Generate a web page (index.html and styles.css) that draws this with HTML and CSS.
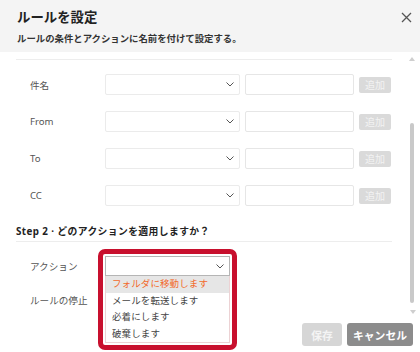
FILE: index.html
```html
<!DOCTYPE html>
<html lang="ja">
<head>
  <meta charset="UTF-8" />
  <title>ルールを設定</title>
  <link rel="stylesheet" href="styles.css">
</head>
<body>
  <div class="modal">

    <!-- HEADER -->
    <div class="modal-header">
      <div class="title-row">
        <h2>ルールを設定</h2>
        <svg class="close" width="11" height="11" viewBox="0 0 11 11"><path d="M1 1L10 10M10 1L1 10" stroke="#555" stroke-width="1.3" fill="none"/></svg>
      </div>
      <p class="subtitle">ルールの条件とアクションに名前を付けて設定する。</p>
    </div>

    <!-- BODY -->
    <div class="modal-body">
      <div class="scroll">
        <div class="divider"></div>

        <div class="conditions">
          <div class="cond-row">
            <span class="label">件名</span>
            <div class="select"><svg width="8" height="5" viewBox="0 0 8 5"><path d="M0.5 0.5L4 4L7.5 0.5" stroke="#555" stroke-width="1" fill="none"/></svg></div>
            <div class="text-input"></div>
            <button class="add-btn">追加</button>
          </div>
          <div class="cond-row">
            <span class="label">From</span>
            <div class="select"><svg width="8" height="5" viewBox="0 0 8 5"><path d="M0.5 0.5L4 4L7.5 0.5" stroke="#555" stroke-width="1" fill="none"/></svg></div>
            <div class="text-input"></div>
            <button class="add-btn">追加</button>
          </div>
          <div class="cond-row">
            <span class="label">To</span>
            <div class="select"><svg width="8" height="5" viewBox="0 0 8 5"><path d="M0.5 0.5L4 4L7.5 0.5" stroke="#555" stroke-width="1" fill="none"/></svg></div>
            <div class="text-input"></div>
            <button class="add-btn">追加</button>
          </div>
          <div class="cond-row">
            <span class="label">CC</span>
            <div class="select"><svg width="8" height="5" viewBox="0 0 8 5"><path d="M0.5 0.5L4 4L7.5 0.5" stroke="#555" stroke-width="1" fill="none"/></svg></div>
            <div class="text-input"></div>
            <button class="add-btn">追加</button>
          </div>
        </div>

        <h3 class="step">Step 2 · どのアクションを適用しますか？</h3>

        <div class="field-row">
          <span class="label">アクション</span>
          <div class="action-field">
            <div class="callout">
              <div class="action-select"><svg width="8" height="5" viewBox="0 0 8 5"><path d="M0.5 0.5L4 4L7.5 0.5" stroke="#555" stroke-width="1" fill="none"/></svg></div>
              <ul class="dropdown">
                <li class="active">フォルダに移動します</li>
                <li>メールを転送します</li>
                <li>必着にします</li>
                <li>破棄します</li>
              </ul>
            </div>
          </div>
        </div>

        <div class="field-row">
          <span class="label">ルールの停止</span>
        </div>
      </div>

      <!-- scrollbar -->
      <div class="scrollbar">
        <svg class="arrow-up" width="6" height="4" viewBox="0 0 6 4"><path d="M0 4L3 0L6 4Z" fill="#cfcfcf"/></svg>
        <div class="thumb"></div>
        <svg class="arrow-down" width="6" height="4" viewBox="0 0 6 4"><path d="M0 0L3 4L6 0Z" fill="#cfcfcf"/></svg>
      </div>
    </div>

    <!-- FOOTER -->
    <div class="modal-footer">
      <button class="btn btn-save">保存</button>
      <button class="btn btn-cancel">キャンセル</button>
    </div>
  </div>
</body>
</html>
```

FILE: styles.css
```css
/* Reset & Base */
* { box-sizing: border-box; margin: 0; padding: 0; }
body {
  font-family: "Noto Sans", "Noto Sans CJK JP", sans-serif;
  background: #fff;
  color: #333;
  width: 420px;
  height: 352px;
  overflow: hidden;
}
ul { list-style: none; }
button { font-family: inherit; border: none; }

/* Header */
.modal-header {
  height: 52px;
  background: #f4f4f4;
  padding: 8px 8px 0 17px;
}
.title-row {
  display: flex;
  justify-content: space-between;
  align-items: center;
  height: 18px;
}
.title-row h2 {
  font-size: 13.4px;
  font-weight: 700;
  color: #222;
  line-height: 18px;
}
.close { margin-top: 1px; }
.subtitle {
  margin-top: 6px;
  font-size: 9.4px;
  font-weight: 700;
  color: #333;
  line-height: 14px;
}

/* Body */
.modal-body {
  position: relative;
  height: 266px;
}
.scroll {
  padding: 7px 28px 0 16px;
}
.divider {
  border-top: 1px solid #ededed;
}

.conditions {
  margin-top: 14px;
  display: flex;
  flex-direction: column;
  gap: 16px;
}
.cond-row, .field-row {
  display: flex;
  align-items: center;
  padding-left: 14px;
}
.cond-row { height: 21px; }
.label {
  width: 75px;
  font-size: 9.6px;
  color: #555;
  flex-shrink: 0;
}
.select {
  width: 135px;
  height: 21px;
  border: 1px solid #ebebeb;
  border-radius: 2px;
  display: flex;
  align-items: center;
  justify-content: flex-end;
  padding-right: 5px;
}
.text-input {
  width: 109px;
  height: 21px;
  margin-left: 5px;
  border: 1px solid #e6e6e6;
  border-radius: 2px;
}
.add-btn {
  width: 32px;
  height: 16px;
  margin-left: 5px;
  background: #dadada;
  color: #f3f3f3;
  border-radius: 2px;
  font-size: 10px;
  line-height: 16px;
}

/* Step heading */
.step {
  margin-top: 20px;
  font-size: 9.8px;
  font-weight: 700;
  color: #222;
  letter-spacing: 0.4px;
  line-height: 12px;
  padding-bottom: 3px;
  border-bottom: 1px solid #ededed;
}

.field-row {
  height: 20px;
  margin-top: 14px;
}
.action-field {
  position: relative;
  width: 124px;
  height: 20px;
}
.callout {
  position: absolute;
  top: -7px;
  left: -7px;
  width: 139px;
  padding: 2px;
  border: 5px solid #c8102e;
  border-radius: 7px;
  background: #fff;
  z-index: 2;
}
.action-select {
  height: 20px;
  border: 1px solid #b5b5b5;
  display: flex;
  align-items: center;
  justify-content: flex-end;
  padding-right: 5px;
}
.dropdown {
  border: 1px solid #ecd2d4;
  border-top: none;
  background: #fff;
}
.dropdown li {
  height: 16.5px;
  line-height: 16.5px;
  padding-left: 6px;
  font-size: 9.5px;
  color: #444;
  letter-spacing: 0.1px;
}
.dropdown li.active {
  background: #e6e6e6;
  color: #f26a2b;
}

/* Scrollbar */
.scrollbar {
  position: absolute;
  top: 5px;
  right: 6px;
  width: 6px;
  height: 257px;
}
.arrow-up { position: absolute; top: 0; left: 1px; }
.arrow-down { position: absolute; bottom: 0; left: 2px; }
.thumb {
  position: absolute;
  top: 66px;
  left: 2px;
  width: 4px;
  height: 180px;
  background: #c9c9c9;
  border-radius: 2px;
}

/* Footer */
.modal-footer {
  display: flex;
  justify-content: flex-end;
  gap: 5px;
  padding: 5px 7px 0 0;
}
.btn {
  height: 23px;
  border-radius: 3px;
  color: #fff;
  font-size: 10.8px;
  font-weight: 700;
}
.btn-save {
  width: 40px;
  background: #d6d6d6;
  color: #f4f4f4;
}
.btn-cancel {
  width: 66px;
  background: #8c8c8c;
}
```
